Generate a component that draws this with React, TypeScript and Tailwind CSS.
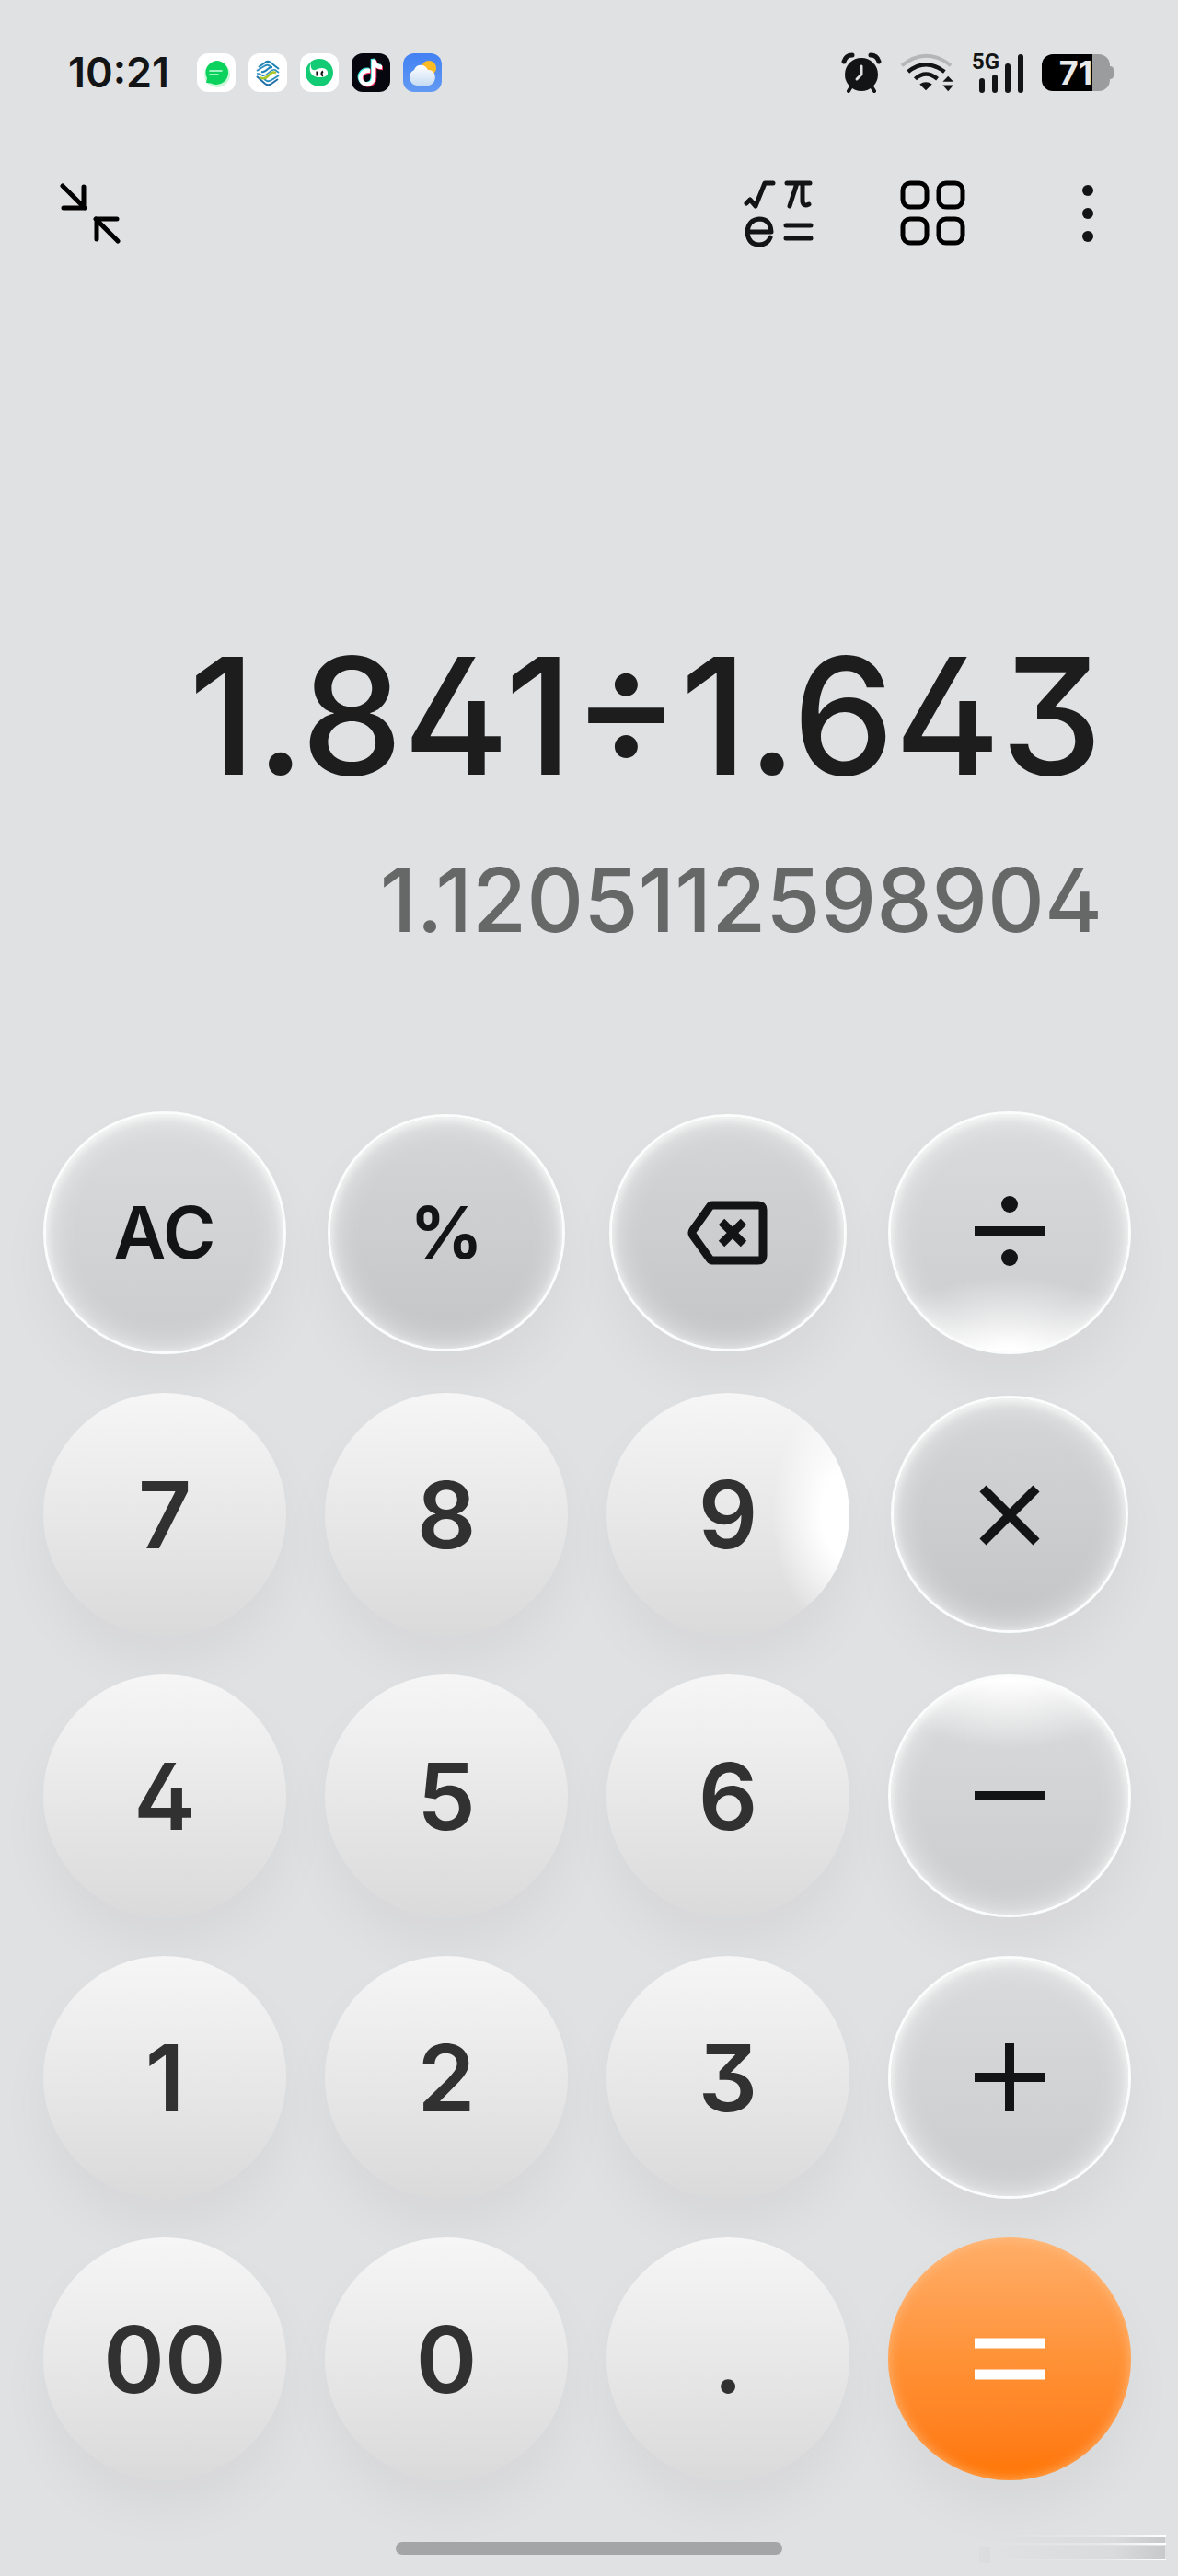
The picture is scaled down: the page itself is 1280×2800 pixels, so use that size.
import type { ReactNode } from 'react';

const Glyph = ({ children }: { children: ReactNode }) => (
	<svg aria-hidden="true" className="size-24" fill="none" viewBox="0 0 96 96">
		{children}
	</svg>
);

type KeyTone = 'digit' | 'action' | 'lit-bottom' | 'lit-top' | 'pressed' | 'lit-right' | 'equals';

const tones: Record<KeyTone, string> = {
	digit: 'text-[#313131] bg-linear-to-b from-[#f6f6f6] via-[#e8e8e8] to-[#dadadb] shadow-[0_32px_56px_#0000000b]',
	'lit-right':
		'text-[#313131] bg-[radial-gradient(ellipse_84px_136px_at_100%_50%,#fff_36%,#ffffff00),linear-gradient(#f6f6f6,#e8e8e8_50%,#dadadb)] shadow-[0_32px_56px_#0000000b]',
	action:
		'text-[#131415] border-3 border-[#fbfcfc] bg-linear-to-b from-[#dadbdc] to-[#cbccce] shadow-[inset_0_3px_10px_#ffffffb3,inset_0_0_32px_#ffffffb3,0_32px_56px_#0000000b]',
	pressed:
		'text-[#131415] m-[3px] border-3 border-[#fbfcfc] bg-linear-to-b from-[#d5d6d7] to-[#c4c5c7] shadow-[inset_0_3px_10px_#ffffffb3,inset_0_0_32px_#ffffffb3,0_32px_56px_#0000000b]',
	'lit-bottom':
		'text-[#131415] border-3 border-[#fbfcfc] bg-[radial-gradient(ellipse_160px_92px_at_50%_104%,#fff_16%,#ffffff00),linear-gradient(#dadbdc,#cbccce)] shadow-[inset_0_3px_10px_#ffffffb3,inset_0_0_32px_#ffffffb3,0_32px_56px_#0000000b]',
	'lit-top':
		'text-[#131415] border-3 border-[#fbfcfc] bg-[radial-gradient(ellipse_150px_88px_at_50%_-4%,#fff_16%,#ffffff00),linear-gradient(#dadbdc,#cbccce)] shadow-[inset_0_3px_10px_#ffffffb3,inset_0_0_32px_#ffffffb3,0_32px_56px_#0000000b]',
	equals:
		'text-white bg-linear-to-b from-[#ffae68] via-[#ff9236] to-[#ff7500] shadow-[inset_0_0_14px_#ffc48fcc,0_32px_56px_#0000000b]',
};

const Key = ({ label, tone = 'digit', children }: { label: string; tone?: KeyTone; children: ReactNode }) => (
	<button
		aria-label={label}
		className={`flex aspect-square items-center justify-center rounded-full text-[101px] leading-none font-semibold ${tones[tone]}`}
		type="button"
	>
		{children}
	</button>
);

const AppBadges = () => (
	<div className="flex gap-3.5">
		<svg aria-hidden="true" className="size-[42px] rounded-xl bg-white" viewBox="0 0 42 42">
			<circle cx="22" cy="23" fill="#c9f7d8" r="14" />
			<path d="M21 8a13 13 0 1 1-6 24.500L10 32l1-5A13 13 0 0 1 21 8Z" fill="#0bd15d" />
			<path d="M14 19h13M14 23h9" stroke="#c9ffdd" strokeLinecap="round" strokeWidth="1.600" />
		</svg>
		<svg aria-hidden="true" className="size-[42px] rounded-xl bg-white" fill="none" viewBox="0 0 42 42">
			<path d="M11 15 18 10c2-1.500 4-1.500 6 0l9 7" stroke="#1f83b5" strokeWidth="2" />
			<path d="m9 19 8-5c4-2.500 5-1 8 1M33 24l-8 5c-4 2.500-5 1-8-1" stroke="#2c8fbd" strokeWidth="2" />
			<path d="M32 28l-7 5c-2 1.500-5 1.500-7 0l-9-8" stroke="#1f6fa8" strokeWidth="2" />
			<path d="M9 22h2l4 2c3 1 5-1 7-3s4-4 7-3l4 3" stroke="#2c8fbd" strokeWidth="1.600" />
			<path d="M12 26c5 3 8 0 11-3s4-3 7-2" stroke="#a8c626" strokeWidth="2.500" />
			<path d="M14 20c3 1 5-1 7-3s3-2 5-2" stroke="#1f83b5" strokeWidth="2" />
		</svg>
		<svg aria-hidden="true" className="size-[42px] rounded-xl bg-white" viewBox="0 0 42 42">
			<circle cx="21" cy="21" fill="#12cb74" r="15" />
			<path d="M12 10c-1 6 1 9 5 8 4-3 12-3 13 2 1 5-4 6-9 6-8 0-13-6-9-16Z" fill="#fff" />
			<path d="M18.500 19.500v5M25 19.500c-2 1-2 4 0 5" fill="none" stroke="#111" strokeWidth="2.200" />
		</svg>
		<svg aria-hidden="true" className="size-[42px] rounded-xl bg-[#07070f]" fill="none" viewBox="0 0 42 42">
			<g strokeWidth="4.500">
				<path d="M19 18c-7-1-11 4-10 9 2 9 14 8 14-2V6c1 5 4 8 9 8" stroke="#42e8e4" />
				<path d="M21 20c-7-1-11 4-10 9 2 8 14 7 14-2V8c1 5 4 8 9 8" stroke="#f32d5c" />
				<path d="M20 19c-7-1-11 4-10 9 2 8 14 7 14-2V7c1 5 4 8 9 8" stroke="#fff" />
			</g>
		</svg>
		<svg aria-hidden="true" className="size-[42px] rounded-xl bg-linear-to-b from-[#4381f3] to-[#6299f3]" viewBox="0 0 42 42">
			<defs>
				<linearGradient id="cloud" x2="0" y2="1">
					<stop stopColor="#fff" />
					<stop offset="1" stopColor="#c6dcf3" />
				</linearGradient>
			</defs>
			<circle cx="28" cy="16" fill="#fdbc24" r="8" />
			<path d="M15 35a9 9 0 0 1-3-17c2-7 12-7 15 0 10-1 11 16 0 17Z" fill="url(#cloud)" />
		</svg>
	</div>
);

const Signal = () => (
	<div className="flex items-end gap-2">
		<div className="flex w-7 flex-col gap-1">
			<span className="font-[Roboto] text-2xl leading-5 font-bold">5G</span>
			<div className="flex items-end justify-end gap-2">
				<i className="h-4 w-1.5 rounded-sm bg-current" />
				<i className="h-5 w-1.5 rounded-sm bg-current" />
			</div>
		</div>
		<i className="h-8 w-1.5 rounded-sm bg-current" />
		<i className="h-[42px] w-1.5 rounded-sm bg-current" />
	</div>
);

const StatusBar = () => (
	<div className="flex items-center justify-between pr-[70px] pl-[74px]">
		<div className="flex items-center gap-[30px]">
			<time className="text-[45px] leading-none font-semibold">10:21</time>
			<AppBadges />
		</div>
		<div className="flex items-center gap-5">
			<svg aria-label="Alarm set" className="size-11" fill="none" role="img" viewBox="0 0 44 44">
				<circle cx="22" cy="24" fill="currentColor" r="18" />
				<path d="M3 10Q5 3 12 3M32 3q7 0 9 7" stroke="currentColor" strokeLinecap="round" strokeWidth="5" />
				<path d="m11 37-3 5m25-5 3 5" stroke="currentColor" strokeLinecap="round" strokeWidth="4" />
				<path d="M22 15v9l-5 5" stroke="#e0e1e3" strokeLinecap="round" strokeWidth="3" />
			</svg>
			<svg aria-label="Wi-Fi" className="h-[42px] w-[58px]" fill="none" role="img" viewBox="0 0 60 42">
				<path d="M2 13Q29-9 57 13" stroke="#b5b6b7" strokeWidth="4" />
				<path d="M9 20q20-16 41 0M17 28q12-11 25 0" stroke="currentColor" strokeWidth="4.500" />
				<path d="m22 34 7 7 7-7q-7-5-14 0ZM54 25l6 6H48ZM54 42l6-7H48Z" fill="currentColor" />
			</svg>
			<Signal />
			<div className="flex items-center">
				<div className="flex h-10 w-[74px] items-center justify-center rounded-xl bg-linear-to-r from-black from-75% to-[#9b9c9d] to-75% text-4xl font-bold text-[#e8e8e8]">
					71
				</div>
				<i className="h-3.5 w-1 rounded-r-sm bg-[#9b9c9d]" />
			</div>
		</div>
	</div>
);

const Toolbar = () => (
	<div className="flex items-center justify-between px-[50px]">
		<button aria-label="Minimise" type="button">
			<Glyph>
				<path
					d="m18 17 24 24M41 18v23H19M78 77 54 53M55 75V53h22"
					stroke="#000"
					strokeLinecap="round"
					strokeLinejoin="round"
					strokeWidth="5"
				/>
			</Glyph>
		</button>
		<div className="flex gap-[71px]">
			<button aria-label="Scientific" type="button">
				<Glyph>
					<g stroke="currentColor" strokeLinecap="round" strokeLinejoin="round" strokeWidth="5">
						<path d="m11 36 4-4 6 7L31 14h9M55 14h25M66 14l-8 25M72 14v20q1 6 7 3M54 60h27M54 74h27" />
						<path d="M12 67h26q-1-14-13-14-12 1-13 14 1 14 13 14 9 0 12-8" />
					</g>
				</Glyph>
			</button>
			<button aria-label="Modes" type="button">
				<Glyph>
					<g stroke="#000" strokeWidth="5">
						<rect height="26" rx="8" width="26" x="14" y="14" />
						<rect height="26" rx="8" width="26" x="53" y="14" />
						<rect height="26" rx="8" width="26" x="14" y="53" />
						<rect height="26" rx="8" width="26" x="53" y="53" />
					</g>
				</Glyph>
			</button>
			<button aria-label="More options" type="button">
				<Glyph>
					<g fill="currentColor">
						<circle cx="48" cy="22" r="6" />
						<circle cx="48" cy="47" r="6" />
						<circle cx="48" cy="72" r="6" />
					</g>
				</Glyph>
			</button>
		</div>
	</div>
);

const Keypad = () => (
	<div className="grid grid-cols-4 gap-[42px] pr-[51px] pl-[47px]">
		<Key label="All clear" tone="action">
			<span className="text-[78px]">AC</span>
		</Key>
		<Key label="Percent" tone="pressed">
			<span className="text-[78px] font-bold">%</span>
		</Key>
		<Key label="Backspace" tone="pressed">
			<Glyph>
				<path
					d="M31 18h50q5 0 5 5v50q0 5-5 5H31q-2 0-3-2L10 51q-2-3 0-6l18-25q1-2 3-2Z"
					stroke="currentColor"
					strokeWidth="9"
				/>
				<path d="m41 36 24 24M65 36 41 60" stroke="currentColor" strokeWidth="9" />
			</Glyph>
		</Key>
		<Key label="Divide" tone="lit-bottom">
			<Glyph>
				<path d="M10 46h76" stroke="currentColor" strokeWidth="10" />
				<circle cx="48" cy="17" fill="currentColor" r="9" />
				<circle cx="48" cy="75" fill="currentColor" r="9" />
			</Glyph>
		</Key>

		<Key label="7">7</Key>
		<Key label="8">8</Key>
		<Key label="9" tone="lit-right">
			9
		</Key>
		<Key label="Multiply" tone="pressed">
			<Glyph>
				<path d="m19 20 58 58M77 20 19 78" stroke="currentColor" strokeWidth="10" />
			</Glyph>
		</Key>

		<Key label="4">4</Key>
		<Key label="5">5</Key>
		<Key label="6">6</Key>
		<Key label="Subtract" tone="lit-top">
			<Glyph>
				<path d="M10 48h76" stroke="currentColor" strokeWidth="10" />
			</Glyph>
		</Key>

		<Key label="1">1</Key>
		<Key label="2">2</Key>
		<Key label="3">3</Key>
		<Key label="Add" tone="action">
			<Glyph>
				<path d="M10 48h76M48 11v74" stroke="currentColor" strokeWidth="10" />
			</Glyph>
		</Key>

		<Key label="Double zero">00</Key>
		<Key label="0">0</Key>
		<Key label="Decimal point">.</Key>
		<Key label="Equals" tone="equals">
			<Glyph>
				<path d="M10 31h76M10 65h76" stroke="currentColor" strokeWidth="11" />
			</Glyph>
		</Key>
	</div>
);

export default function App() {
	return (
		<main className="flex min-h-screen flex-col bg-[#e0e1e3] pt-14 pb-2 font-[Inter,sans-serif] text-[#131415] [font-feature-settings:'cv02','cv09']">
			<StatusBar />
			<div className="pt-[84px]">
				<Toolbar />
			</div>
			<div className="flex flex-1 flex-col items-end justify-end pr-[82px] pb-44">
				<p className="text-[176px] leading-[196px] font-medium text-[#1d1d1d]">1.841÷1.643</p>
				<output className="pt-12 text-[96px] leading-[108px] font-medium text-[#666767]">1.1205112598904</output>
			</div>
			<Keypad />
			<footer className="grid grid-cols-[1fr_420px_1fr] items-center pt-[52px]">
				<i className="col-start-2 h-3.5 rounded-full bg-[#a4a5a7]" />
				<svg aria-hidden="true" className="mr-3 h-11 w-[204px] justify-self-end" viewBox="0 0 204 44">
					<defs>
						<linearGradient id="shine">
							<stop stopColor="#fff" stopOpacity="0" />
							<stop offset="0.600" stopColor="#fff" stopOpacity="0.200" />
							<stop offset="1" stopColor="#fff" />
						</linearGradient>
						<linearGradient id="shade">
							<stop stopColor="#b8b9bb" stopOpacity="0" />
							<stop offset="0.700" stopColor="#b8b9bb" stopOpacity="0.150" />
							<stop offset="1" stopColor="#b8b9bb" stopOpacity="0.600" />
						</linearGradient>
					</defs>
					<path d="M0 20h12v18H0Z" fill="#b8b9bb" fillOpacity="0.100" />
					<path d="M15 10h187v6H15ZM15 19h187v14H15Z" fill="url(#shade)" />
					<path d="M15 7h188v3H15ZM15 16h188v2H15ZM15 33h188v2H15Z" fill="url(#shine)" />
				</svg>
			</footer>
		</main>
	);
}
